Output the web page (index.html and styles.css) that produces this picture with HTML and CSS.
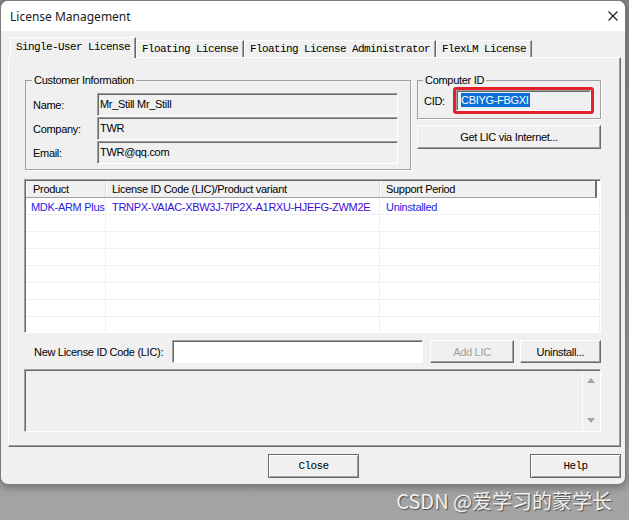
FILE: index.html
```html
<!DOCTYPE html>
<html lang="en">
<head>
    <meta charset="UTF-8">
    <meta name="viewport" content="width=device-width, initial-scale=1.0">
    <title>License Management</title>
    <link rel="stylesheet" href="styles.css">
</head>
<body>
    <div class="window">
        <div class="titlebar">
            <span class="title">License Management</span>
            <svg class="close-x" width="10" height="10" viewBox="0 0 10 10">
                <path d="M0.5 0.5L9.5 9.5M9.5 0.5L0.5 9.5" stroke="#1b1b1b" stroke-width="1.1" fill="none"/>
            </svg>
        </div>

        <div class="client">
            <div class="tabs">
                <div class="tab active">Single-User License</div>
                <div class="tab">Floating License</div>
                <div class="tab">Floating License Administrator</div>
                <div class="tab">FlexLM License</div>
            </div>

            <div class="panel">
                <div class="top-row">
                    <fieldset class="group customer">
                        <legend>Customer Information</legend>
                        <div class="field"><label>Name:</label><div class="box">Mr_Still Mr_Still</div></div>
                        <div class="field"><label>Company:</label><div class="box">TWR</div></div>
                        <div class="field"><label>Email:</label><div class="box">TWR@qq.com</div></div>
                    </fieldset>

                    <div class="right-col">
                        <fieldset class="group computer">
                            <legend>Computer ID</legend>
                            <div class="cid-row">
                                <label>CID:</label>
                                <div class="highlight">
                                    <div class="box cid"><span class="sel">CBIYG-FBGXI</span></div>
                                </div>
                            </div>
                        </fieldset>
                        <button class="btn wide">Get LIC via Internet...</button>
                    </div>
                </div>

                <div class="list">
                    <div class="head">
                        <span>Product</span>
                        <span>License ID Code (LIC)/Product variant</span>
                        <span>Support Period</span>
                    </div>
                    <div class="row">
                        <span>MDK-ARM Plus</span>
                        <span class="lic">TRNPX-VAIAC-XBW3J-7IP2X-A1RXU-HJEFG-ZWM2E</span>
                        <span>Uninstalled</span>
                    </div>
                    <div class="row"><span></span><span></span><span></span></div>
                    <div class="row"><span></span><span></span><span></span></div>
                    <div class="row"><span></span><span></span><span></span></div>
                    <div class="row"><span></span><span></span><span></span></div>
                    <div class="row"><span></span><span></span><span></span></div>
                    <div class="row"><span></span><span></span><span></span></div>
                    <div class="row"><span></span><span></span><span></span></div>
                </div>

                <div class="new-row">
                    <label for="new_lic">New License ID Code (LIC):</label>
                    <input type="text" id="new_lic" class="entry">
                    <button class="btn add" disabled>Add LIC</button>
                    <button class="btn uninstall">Uninstall...</button>
                </div>

                <div class="log">
                    <div class="log-body"></div>
                    <div class="log-scroll">
                        <svg width="8" height="5" viewBox="0 0 8 5"><path d="M4 0L8 5H0Z" fill="#a3a3a3"/></svg>
                        <svg width="8" height="5" viewBox="0 0 8 5"><path d="M0 0H8L4 5Z" fill="#a3a3a3"/></svg>
                    </div>
                </div>
            </div>

            <div class="footer">
                <button class="btn dlg close">Close</button>
                <button class="btn dlg help">Help</button>
            </div>
        </div>
    </div>

    <div class="watermark">CSDN @爱学习的蒙学长</div>
</body>
</html>
```

FILE: styles.css
```css
* { box-sizing: border-box; }
html, body { margin: 0; }
body { width: 629px; height: 520px; overflow: hidden; background: linear-gradient(#858585, #a4a4a4); font-family: "Liberation Sans", Arial, sans-serif; font-size: 11px; letter-spacing: -0.3px; color: #000; }

/* dialog frame */
.window { width: 626px; background: #f0f0f0; border: 1px solid #7a7a7a; border-radius: 8px; overflow: hidden; box-shadow: 0 2px 8px rgba(0, 0, 0, 0.35); }
.titlebar { height: 30px; background: #fff; display: flex; align-items: center; justify-content: space-between; padding: 0 7px 0 9px; }
.title { font-family: "Noto Sans", "Open Sans", sans-serif; font-size: 12px; letter-spacing: 0; color: #1a1a1a; }
.client { padding: 6px 4px 6px 7px; }

/* tab strip */
.tabs { display: flex; align-items: flex-end; height: 20px; padding-left: 2px; font-family: "Liberation Mono", monospace; font-size: 11px; letter-spacing: -0.6px; }
.tab { height: 17px; padding: 0 5px; border: 1px solid; border-bottom: 0; border-color: #fff #696969 transparent #fff; box-shadow: inset -1px 0 0 #a0a0a0; line-height: 16px; white-space: nowrap; }
.tab.active { height: 21px; margin-bottom: -1px; position: relative; z-index: 1; background: #f0f0f0; line-height: 18px; }
.panel { border: 1px solid; border-color: #fff #696969 #696969 #fff; box-shadow: inset -1px -1px 0 #a0a0a0; padding: 15px 19px 14px 15px; }

/* group boxes */
.top-row { display: flex; gap: 6px; }
.group { margin: 0; border: 1px solid #a0a0a0; box-shadow: 1px 1px 0 #fff; min-width: 0; }
legend { padding: 0 2px; margin-left: -1px; line-height: 14px; }
.customer { width: 386px; margin-left: 1px; padding: 6px 12px 5px 7px; }
.field { display: flex; align-items: center; height: 23px; margin-bottom: 1px; }
.field:last-child { margin-bottom: 0; }
.field label { width: 64px; }
.field .box { flex: 1; height: 23px; }
.box { border: 1px solid; border-color: #a0a0a0 #fff #fff #a0a0a0; box-shadow: inset 1px 1px 0 #696969; background: #f0f0f0; padding: 1px 0 0 2px; line-height: 18px; white-space: nowrap; }

.right-col { width: 184px; display: flex; flex-direction: column; }
.computer { padding: 0 4px 4px 6px; }
.cid-row { display: flex; align-items: center; height: 27px; }
.cid-row label { width: 29px; }
.highlight { border: 3px solid #e4202a; border-radius: 3px; }
.cid { width: 135px; height: 21px; padding: 2px 0 0 4px; line-height: 14px; }
.sel { background: #0a6fd6; color: #fff; display: inline-block; padding-right: 1px; }

/* push buttons */
.btn { font: inherit; letter-spacing: inherit; color: #000; background: #f0f0f0; height: 24px; padding: 0; border: 1px solid; border-color: #fff #696969 #696969 #fff; box-shadow: inset -1px -1px 0 #a0a0a0; }
.btn.wide { margin-top: 6px; width: 100%; }
.btn.add { margin-left: 7px; width: 84px; height: 23px; color: #a0a0a0; }
.btn.uninstall { margin-left: 6px; width: 81px; height: 23px; }

/* product list */
.list { margin-top: 9px; height: 154px; background: #fff; border: 1px solid; border-color: #a0a0a0 #fff #fff #a0a0a0; box-shadow: inset 1px 1px 0 #696969; padding: 1px 0 0 1px; overflow: hidden; }
.head { display: grid; grid-template-columns: 80px 274px 217px; height: 17px; }
.head span { background: #f0f0f0; border-bottom: 1px solid #a0a0a0; border-right: 1px solid #dcdcdc; box-shadow: inset 1px 0 0 #fff; padding: 1px 0 0 6px; line-height: 15px; }
.head span:first-child { padding-left: 7px; }
.head span:last-child { border-right: 2px solid #6e6e6e; }
.row { display: grid; grid-template-columns: 80px 274px 1fr; height: 17px; border-bottom: 1px solid #f0f0f0; color: #2424e6; }
.row span { border-right: 1px solid #f0f0f0; padding: 2px 0 0 6px; line-height: 14px; white-space: nowrap; overflow: hidden; }
.row span:first-child { padding-left: 5px; }
.row .lic { color: #3a0cd6; }

/* new licence entry */
.new-row { display: flex; align-items: center; margin-top: 7px; height: 23px; }
.new-row label { margin-left: 10px; width: 138px; }
.entry { width: 251px; height: 23px; margin: 0; background: #fff; border: 1px solid; border-color: #a0a0a0 #fff #fff #a0a0a0; box-shadow: inset 1px 1px 0 #696969; font: inherit; }

/* message area */
.log { margin-top: 6px; height: 63px; display: flex; border: 1px solid; border-color: #a0a0a0 #fff #fff #a0a0a0; box-shadow: inset 1px 1px 0 #696969; padding: 1px 0 0 1px; }
.log-body { flex: 1; }
.log-scroll { width: 18px; border-left: 1px solid #fff; display: flex; flex-direction: column; justify-content: space-between; align-items: center; padding: 7px 2px 8px 0; }
.log-scroll svg { display: block; }

/* dialog buttons */
.footer { display: flex; margin-top: 7px; }
.btn.dlg { width: 91px; height: 24px; font-family: "Liberation Mono", monospace; letter-spacing: -0.6px; border: 1px solid #696969; box-shadow: inset 1px 1px 0 #fff, inset -1px -1px 0 #a0a0a0; }
.btn.close { margin-left: 260px; }
.btn.help { margin-left: auto; }

.watermark { text-align: right; padding-right: 17px; margin-top: 3px; font-family: "Noto Sans CJK SC", sans-serif; font-size: 20px; line-height: 26px; letter-spacing: 0; color: #f0f0f0; text-shadow: 1px 1px 1px #4d4d4d; }
```
